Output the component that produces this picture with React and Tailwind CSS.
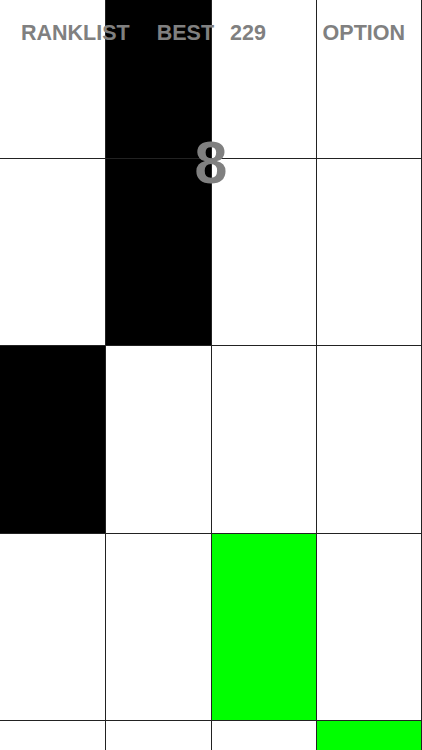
const COLS = ['w-[106px]', 'w-[106px]', 'w-[105px]', 'w-[105px]']

const rows = [
  { h: 'h-[159px]', tiles: [null, 'black', null, null] },
  { h: 'h-[187px]', tiles: [null, 'black', null, null] },
  { h: 'h-[188px]', tiles: ['black', null, null, null] },
  { h: 'h-[187px]', tiles: [null, null, 'green', null] },
  { h: 'h-[40px]', tiles: [null, null, null, 'green'] },
]

function Cell({ width, tile }) {
  const bg = tile === 'black' ? 'bg-black' : tile === 'green' ? 'bg-[#00ff00]' : 'bg-white'
  return <div className={`${width} h-full shrink-0 border-r border-[#222] ${bg}`} />
}

export default function App() {
  return (
    <div
      className="relative w-[422px] h-[750px] overflow-hidden bg-white"
      style={{ fontFamily: '"Liberation Sans", Arial, sans-serif' }}
    >
      <div className="flex flex-col">
        {rows.map((row, i) => (
          <div key={i} className={`flex shrink-0 ${row.h} border-b border-[#222]`}>
            {row.tiles.map((tile, j) => (
              <Cell key={j} width={COLS[j]} tile={tile} />
            ))}
          </div>
        ))}
      </div>

      <div className="absolute top-[20px] left-0 right-0 flex items-center text-[21.5px] font-bold text-[#808080] leading-[26px]">
        <span className="ml-[21px]">RANKLIST</span>
        <span className="ml-[27px]">BEST</span>
        <span className="ml-[16px]">229</span>
        <span className="ml-auto mr-[17px]">OPTION</span>
      </div>

      <div className="absolute top-[130px] left-0 right-0 text-center text-[59px] font-bold text-[#808080] leading-[66px]">
        8
      </div>
    </div>
  )
}
